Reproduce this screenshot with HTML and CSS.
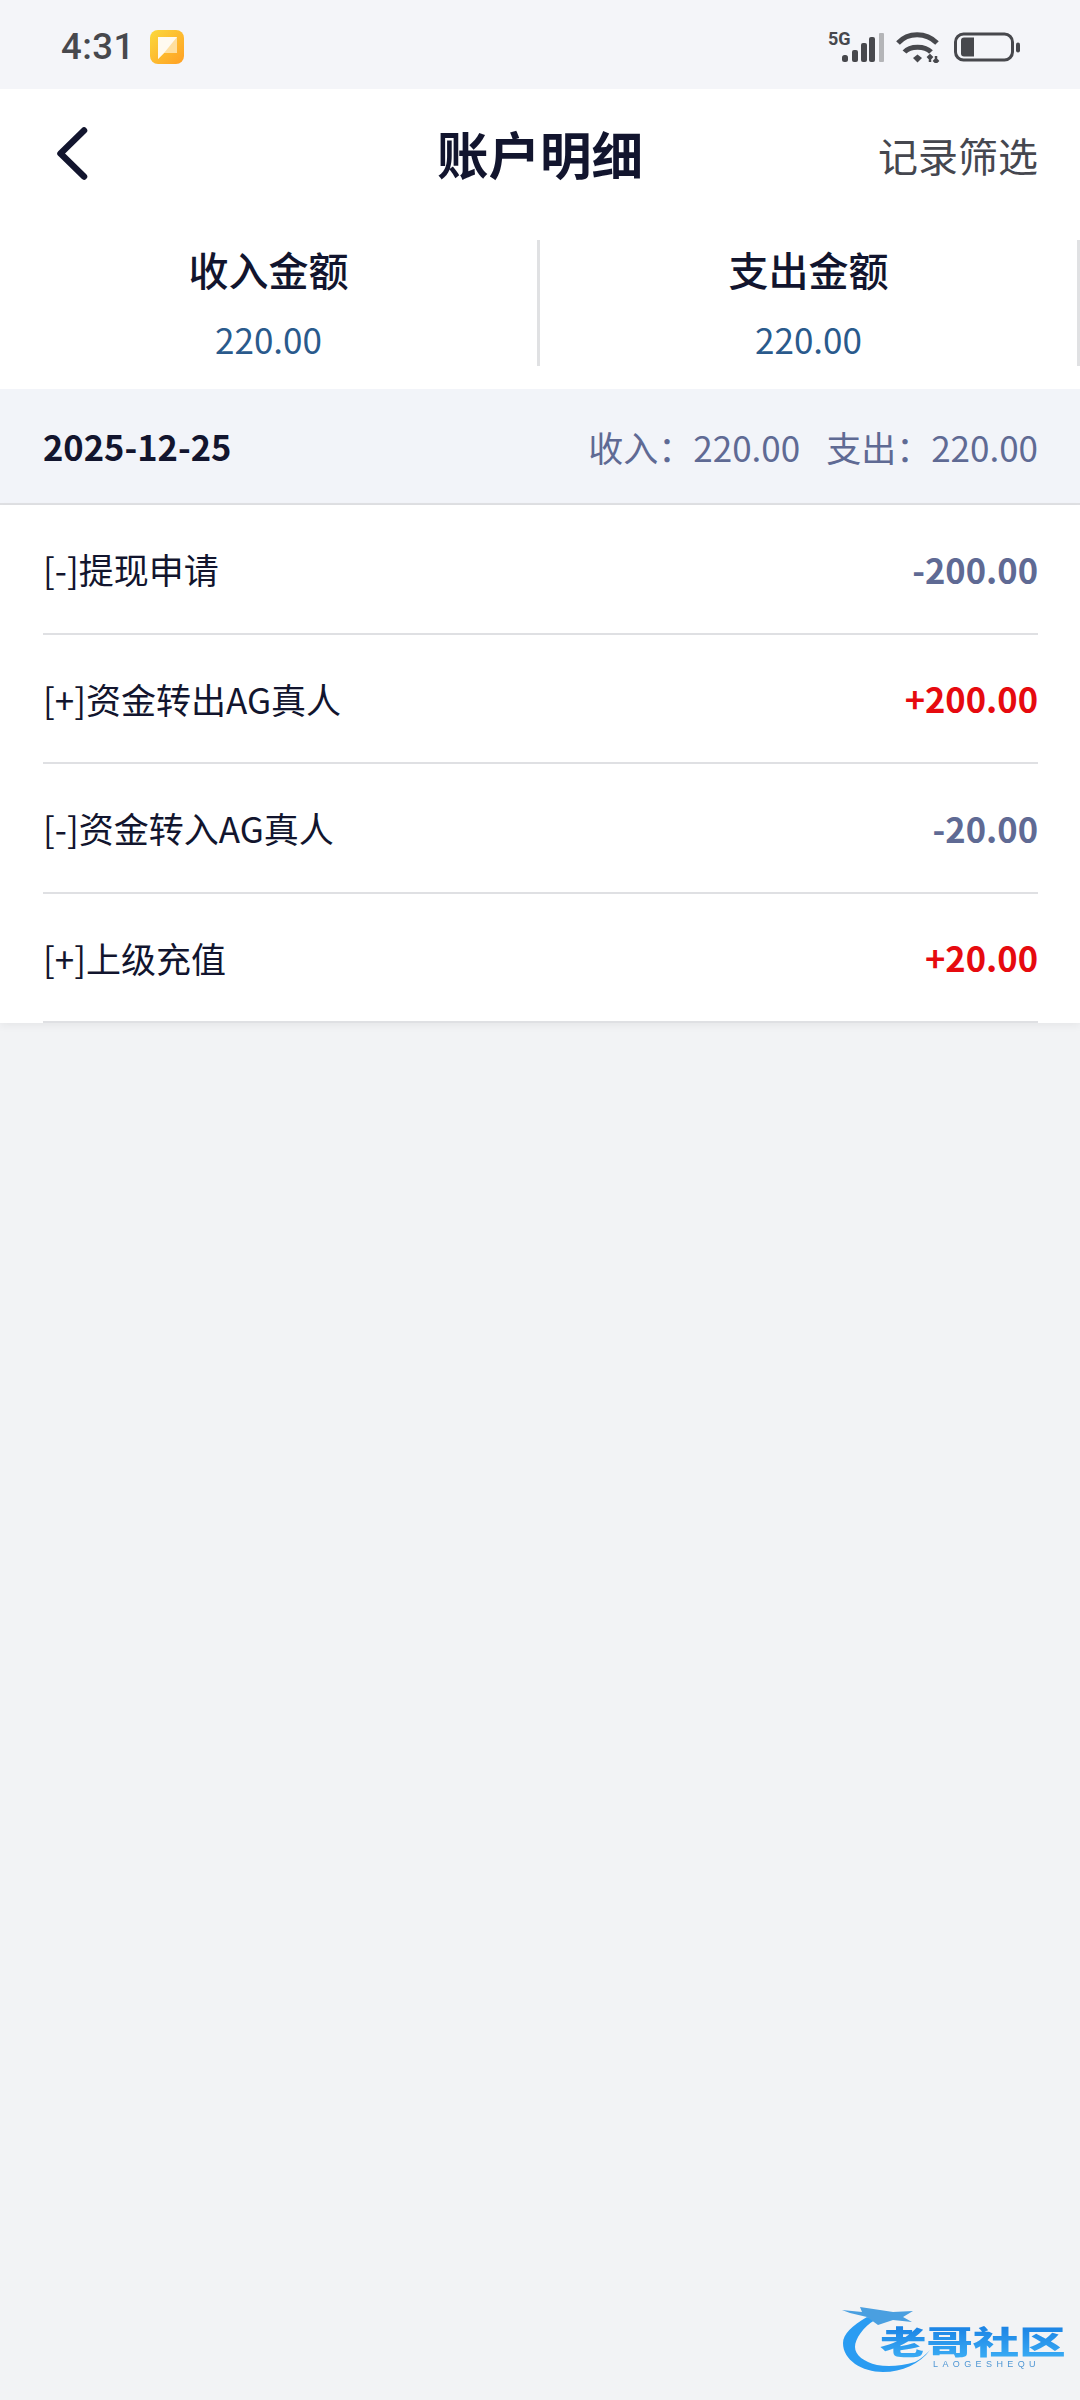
FILE: index.html
```html
<!DOCTYPE html>
<html lang="zh-CN">
<head>
  <meta charset="UTF-8" />
  <meta name="viewport" content="width=device-width, initial-scale=1.0" />
  <title>账户明细</title>
  <link rel="stylesheet" href="styles.css">
</head>
<body>
  <div class="statusbar">
    <div class="status-left">
      <span class="clock">4:31</span>
      <svg class="app-icon" width="36" height="36" viewBox="0 0 36 36">
        <defs>
          <linearGradient id="appbg" x1="0" y1="0" x2="1" y2="1">
            <stop offset="0" stop-color="#fbd93c"/>
            <stop offset="1" stop-color="#ff9f24"/>
          </linearGradient>
        </defs>
        <rect x="1" y="1" width="34" height="34" rx="8" fill="url(#appbg)"/>
        <path d="M9 8H28V24H15L9 30Z" fill="#ffdf9f"/>
        <path d="M9 8H28L15 24L9 30Z" fill="#fffaf0"/>
      </svg>
    </div>
    <div class="status-right">
      <svg width="56" height="36" viewBox="0 0 56 36">
        <text class="net" x="0" y="18">5G</text>
        <rect x="14" y="28" width="6" height="7" rx="2.5" fill="#47484d"/>
        <rect x="24" y="23" width="6" height="12" rx="2" fill="#47484d"/>
        <rect x="33" y="16" width="6" height="19" rx="2" fill="#47484d"/>
        <rect x="41" y="10" width="6" height="25" rx="2" fill="#47484d"/>
        <rect x="51" y="6" width="5" height="29" rx="1" fill="#b4b5b8"/>
      </svg>
      <svg width="47" height="36" viewBox="0 0 47 36" fill="none" stroke="#47484d" stroke-width="5">
        <path d="M3 16C13 5 31 5 42 16"/>
        <path d="M9.5 25C15 18.5 30 18.5 36 25"/>
        <path d="M18 31L22.5 27.5L27 31L22.5 35.5Z" fill="#47484d" stroke="none"/>
        <path d="M35 35V29M32.5 31L35 28.5L37.5 31M41 29V35M38.5 33L41 35.5L43.5 33" stroke-width="2.5"/>
      </svg>
      <svg width="68" height="36" viewBox="0 0 68 36">
        <rect x="2.5" y="7" width="57" height="26" rx="8" fill="none" stroke="#47484d" stroke-width="3"/>
        <path d="M11 10.5H21V29.5H11C9 29.5 8 28.5 8 26.5V13.5C8 11.5 9 10.5 11 10.5Z" fill="#47484d"/>
        <rect x="63" y="15.5" width="4" height="10" rx="2" fill="#47484d"/>
      </svg>
    </div>
  </div>

  <header class="navbar">
    <svg class="back" width="36" height="56" viewBox="0 0 36 56" fill="none" stroke="#12152e" stroke-width="6.5" stroke-linecap="round" stroke-linejoin="round">
      <path d="M28 3.5L4.5 26.5L28 49.5"/>
    </svg>
    <h1 class="title">账户明细</h1>
    <span class="filter">记录筛选</span>
  </header>

  <section class="summary">
    <div class="summary-col">
      <div class="summary-label">收入金额</div>
      <div class="summary-value">220.00</div>
    </div>
    <div class="summary-col">
      <div class="summary-label">支出金额</div>
      <div class="summary-value">220.00</div>
    </div>
  </section>

  <div class="date-row">
    <span class="date">2025-12-25</span>
    <div class="date-totals">
      <span>收入：220.00</span>
      <span>支出：220.00</span>
    </div>
  </div>

  <ul class="records">
    <li class="record">
      <span class="record-name">[-]提现申请</span>
      <span class="amount out">-200.00</span>
    </li>
    <li class="record">
      <span class="record-name">[+]资金转出AG真人</span>
      <span class="amount in">+200.00</span>
    </li>
    <li class="record">
      <span class="record-name">[-]资金转入AG真人</span>
      <span class="amount out">-20.00</span>
    </li>
    <li class="record">
      <span class="record-name">[+]上级充值</span>
      <span class="amount in">+20.00</span>
    </li>
  </ul>

  <svg class="watermark" width="230" height="76" viewBox="0 0 230 76">
    <defs>
      <linearGradient id="wm" x1="0" y1="0" x2="0" y2="1">
        <stop offset="0" stop-color="#1277e0"/>
        <stop offset="1" stop-color="#3fb2f6"/>
      </linearGradient>
    </defs>
    <path d="M25 15C10 24 1 32 1 41C1 58 20 70 41 70C60 70 78 62 88 48C84 52 79 57 73 60C60 64 46 65 35 63C22 60 13 53 13 45C13 37 21 25 33 18Z" fill="#2a9cf2"/>
    <path d="M0 8L20 10L18 5L38 8L51 10L71 9L61 15L70 20L51 18L36 23L25 15L8 11Z" fill="#4a9fe0"/>
    <text class="wm-title" transform="translate(38 52) scale(1.45 1)" fill="url(#wm)">老哥社区</text>
    <text class="wm-sub" x="91" y="65">LAOGESHEQU</text>
  </svg>
</body>
</html>
```

FILE: styles.css
```css
* {
  box-sizing: border-box;
}
html, body {
  height: 100%;
}
body {
  position: relative;
  margin: 0;
  padding: 0;
  background: #f2f3f5;
  color: #12152e;
  font-family: "Noto Sans CJK SC", "Noto Sans", sans-serif;
}
.statusbar {
  display: flex;
  justify-content: space-between;
  align-items: center;
  height: 89px;
  padding: 0 59px 0 61px;
  background: #f4f5f9;
}
.status-left {
  display: flex;
  align-items: center;
  gap: 14px;
  padding-top: 4px;
}
.clock {
  font-family: Roboto, sans-serif;
  font-size: 36.5px;
  font-weight: 500;
  letter-spacing: 0.5px;
  color: #47484d;
}
.status-right {
  display: flex;
  align-items: center;
  gap: 11px;
}
.net {
  font-family: Roboto, sans-serif;
  font-size: 18px;
  font-weight: 700;
  fill: #47484d;
}
.navbar {
  display: flex;
  justify-content: space-between;
  align-items: center;
  position: relative;
  height: 131px;
  padding: 0 42px 0 56px;
  background: #fff;
}
.title {
  position: absolute;
  left: 0;
  right: 0;
  top: 28px;
  margin: 0;
  text-align: center;
  font-size: 51.5px;
  line-height: 72px;
  font-weight: 700;
}
.filter {
  font-size: 40px;
  color: #45474f;
}
.summary {
  display: flex;
  height: 169px;
  padding-top: 20px;
  background: #fff;
}
.summary-col {
  flex: 1;
  height: 126px;
  text-align: center;
  border-right: 3px solid #e0e1e3;
}
.summary-label {
  font-size: 40px;
  font-weight: 500;
  line-height: 58px;
}
.summary-value {
  margin-top: 15px;
  font-size: 35px;
  line-height: 52px;
  color: #2a5a8c;
}
.date-row {
  display: flex;
  justify-content: space-between;
  align-items: center;
  height: 116px;
  padding: 0 42px 0 43px;
  background: #f2f4f9;
  border-bottom: 2px solid #dfe0e3;
}
.date {
  font-size: 34.5px;
  font-weight: 700;
}
.date-totals {
  display: flex;
  gap: 26px;
  font-size: 35px;
  color: #5f6a94;
}
.records {
  list-style: none;
  margin: 0;
  padding: 0 42px 0 43px;
  background: #fff;
  box-shadow: 0 3px 8px rgba(0,0,0,0.05);
}
.record {
  display: flex;
  justify-content: space-between;
  align-items: center;
  height: 129.5px;
  border-bottom: 2px solid #dfe0e3;
}
.record-name {
  font-size: 35px;
}
.amount {
  font-size: 34.5px;
  font-weight: 700;
}
.amount.out {
  color: #5f6a94;
}
.amount.in {
  color: #e60a0f;
}
.watermark {
  position: absolute;
  left: 842px;
  top: 2302px;
  filter: blur(0.6px);
}
.wm-title {
  font-size: 32px;
  font-weight: 900;
}
.wm-sub {
  font-family: "Liberation Sans", sans-serif;
  font-size: 9px;
  letter-spacing: 4.4px;
  fill: #4f96d4;
}
```
